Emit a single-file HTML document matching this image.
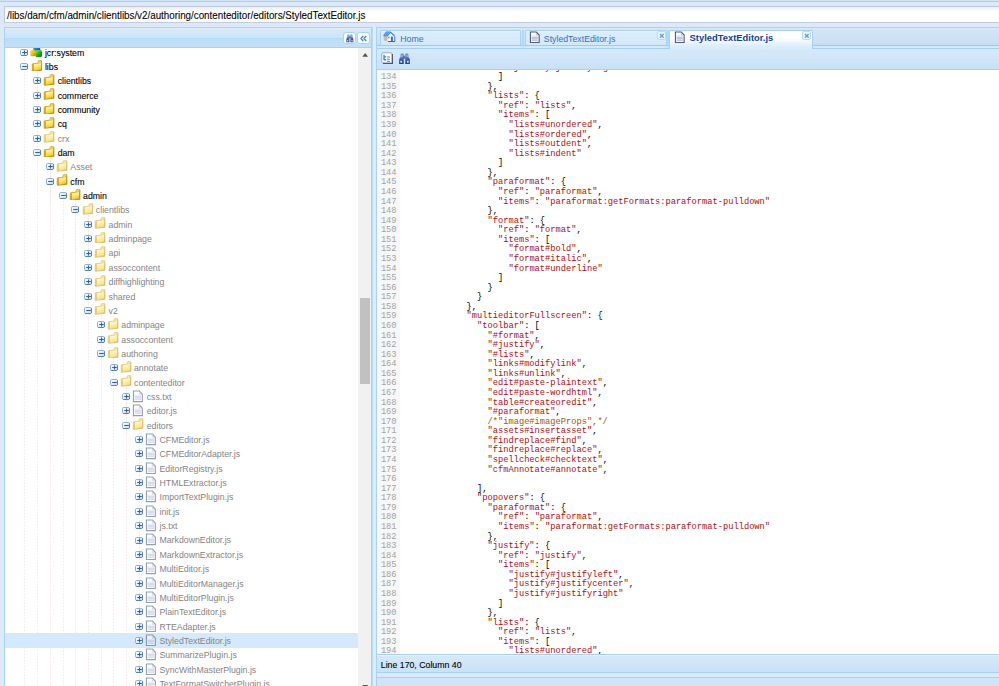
<!DOCTYPE html>
<html><head><meta charset="utf-8"><style>
*{margin:0;padding:0;box-sizing:border-box}
html,body{width:999px;height:686px;overflow:hidden;background:#dde9f7;font-family:"Liberation Sans",sans-serif;position:relative}
.abs{position:absolute}
#topband{left:0;top:0;width:999px;height:2px;background:linear-gradient(#cfe3f7 0,#cfe3f7 1px,#a8d0f2 1px)}
#addr{left:4px;top:5.6px;width:1000px;height:17.6px;border:1px solid #bcc8e4;border-bottom-color:#c2cce6;background:linear-gradient(#e8f0ee,#ffffff 5px);white-space:nowrap;overflow:hidden}
#addr span{position:absolute;left:1.7px;top:1.2px;font-size:11.6px;line-height:14px;color:#000;-webkit-text-stroke:0.1px #000;transform:scaleX(0.845);transform-origin:0 0}
#lp{left:4px;top:27px;width:368px;height:670px;border:1px solid #a8d4f4;background:#fff;overflow:hidden}
#lph{left:0;top:0;width:366px;height:19.9px;border-bottom:1px solid #a4d2f3;background:linear-gradient(#e0effb 0,#e0effb 1px,#d7eafa 1px,#cbe5f8 9.6px,#b6dbf6 10.4px,#badef6 11px,#c2e1f8 19.5px)}
.hb{position:absolute;top:4.2px;width:12.6px;height:11.8px;border:1px solid #a9d3f3;border-radius:3px;background:#fbfdff;box-shadow:0 0 0 0.5px #c8e4f8}
#tree{position:absolute;left:-5px;top:-28px;width:1000px;height:800px}
#tree .exp{position:absolute;width:8px;height:7.2px}
#tree .ic{position:absolute;width:11.8px;height:11.8px}
#tree .ic.g{opacity:.58}
#tree .tx{position:absolute;font-size:8.75px;line-height:14.35px;color:#000;-webkit-text-stroke:0.1px #000;white-space:nowrap}
#tree .tx.g{color:#848484;-webkit-text-stroke:0}
.vl{position:absolute;width:1px;background:repeating-linear-gradient(#f5e6e6 0,#f5e6e6 1.5px,#fefafa 1.5px,#fefafa 3px)}
.selrow{position:absolute;left:5px;width:353px;height:14.9px;background:#d4eafc}
#sb{left:353px;top:19.9px;width:12.5px;height:660px;background:#f1f1f1}
#thumb{left:1.6px;top:249.8px;width:10.4px;height:86.5px;background:#c1c1c1}
#split{left:372px;top:27px;width:4px;height:660px;background:linear-gradient(90deg,#b5dbf5 0,#b5dbf5 1px,#deebfa 1px)}
#rp{left:376px;top:27px;width:630px;height:660px;border-left:1px solid #a8d4f4;border-top:1px solid #a8d4f4}
#strip{left:0;top:0;width:630px;height:18px;background:linear-gradient(#d6e7f8,#c5def5)}
.tab{position:absolute;top:2.2px;height:14.9px;border:1px solid #a6d2f3;border-bottom:none;background:linear-gradient(#eaf4fd 0,#eaf4fd 1px,#dceefc 1px,#d2e8fb);border-radius:2px 2px 0 0;white-space:nowrap}
.tab .t{position:absolute;top:1.4px;font-size:8.75px;line-height:12px;color:#3570c0}
.tab.act{height:19px;background:linear-gradient(#ffffff 0,#ffffff 7px,#dcedfc 15px,#d8ebfb)}
.tab.act .t{font-weight:bold;color:#15428b;font-size:9.4px;top:0.7px}
.tab .x{position:absolute;top:0px;width:8.6px;height:8.4px;border:1px solid #b8dcf6;border-radius:2px;background:#eaf5fe}
#stripb{left:0;top:16.9px;width:630px;height:4px;background:linear-gradient(#9ccbf0 0,#9ccbf0 1.2px,#e6f2fb 1.6px,#e6f2fb 2.4px,#a3cff2 2.8px,#a3cff2 4px)}
#tb{left:0;top:20.9px;width:630px;height:21.4px;background:linear-gradient(#d7e9f9,#c8e1f7);border-bottom:1.2px solid #a4d2f3}
#code{left:0;top:42.3px;width:630px;height:584px;background:#fff;overflow:hidden}
#gut{left:0;top:0;width:22.8px;height:584px;background:#f7f7f7}
.cl,.ln{position:absolute;font-family:"Liberation Mono",monospace;font-size:8.73px;line-height:9.573px;white-space:pre}
.cl{left:26.8px;color:#000}
.ln{left:0;width:19.6px;text-align:right;color:#a3a3a3}
.s{color:#a11}
.c{color:#a50}
#stat{left:0;top:625.6px;width:630px;height:19.8px;border-top:1.2px solid #a4d2f3;border-bottom:1.2px solid #a4d2f3;background:linear-gradient(#e8f3fc 0,#e8f3fc 1px,#d6e9f9 1px,#c9e2f6)}
#stat span{position:absolute;left:3.8px;top:5.5px;font-size:8.75px;line-height:10px;color:#000;-webkit-text-stroke:0.1px #000}
#bot{left:376px;top:677.4px;width:630px;height:20px;border:1px solid #a4d2f3;background:#cfe4f8}
.ticon{position:absolute;width:11.5px;height:11.5px}
</style></head>
<body>
<svg width="0" height="0" style="position:absolute">
<defs>
<linearGradient id="gexp" x1="0" y1="0" x2="1" y2="1"><stop offset="0" stop-color="#ffffff"/><stop offset="1" stop-color="#cfe1f1"/></linearGradient>
<linearGradient id="gfold" x1="0" y1="0" x2="0.3" y2="1"><stop offset="0" stop-color="#fffbd0"/><stop offset="0.5" stop-color="#fbe97a"/><stop offset="1" stop-color="#f2c82a"/></linearGradient>
<linearGradient id="gfoldb" x1="0" y1="0" x2="1" y2="1"><stop offset="0" stop-color="#e8b830"/><stop offset="1" stop-color="#b98a12"/></linearGradient>
<linearGradient id="gbino" x1="0" y1="0" x2="0" y2="1"><stop offset="0" stop-color="#6d8fd0"/><stop offset="1" stop-color="#1f3f8a"/></linearGradient>
<g id="ep"><rect x="0.5" y="0.5" width="7" height="6" rx="1.2" fill="url(#gexp)" stroke="#8cb0d3" stroke-width="1"/><path d="M1.2 6.5H6.8M7.5 1.3V6" fill="none" stroke="#5684b2" stroke-width="1"/><path d="M2.2 3.5H6.8M4.5 1.4V5.6" stroke="#33638f" stroke-width="1.1"/></g>
<g id="em"><rect x="0.5" y="0.5" width="7" height="6" rx="1.2" fill="url(#gexp)" stroke="#8cb0d3" stroke-width="1"/><path d="M1.2 6.5H6.8M7.5 1.3V6" fill="none" stroke="#5684b2" stroke-width="1"/><path d="M2.2 3.5H6.8" stroke="#33638f" stroke-width="1.1"/></g>
<g id="ifold"><path d="M1 6.2 Q1 4.7 2.4 4.5 L8.6 3.6 L9.4 1.4 Q9.7 0.6 10.6 0.5 L14 0.3 Q15.4 0.3 15.4 1.8 L15.4 13.6 Q15.4 14.4 14.6 14.6 L2.4 16 Q1 16.1 1 14.7Z" fill="url(#gfoldb)"/><path d="M4 5.7 L13.6 3.9 L13.6 12.9 L4 14.6Z" fill="url(#gfold)"/><path d="M10.3 2.2 L14 1.9 L14 3.2 L10 3.8Z" fill="#fff6c0"/></g>
<g id="ifile"><path d="M1.2 0.6 H10.4 L14.8 5 V15.6 H1.2Z" fill="#4f5a6e"/><path d="M2.7 2 H9.6 L13.3 5.7 V14.1 H2.7Z" fill="#fbfbff"/><path d="M9.4 2 V5.9 H13.3" fill="#bfc6d6"/><path d="M3.6 8H12.2M3.6 9.9H12.2M3.6 11.8H12.2" stroke="#a9b2dc" stroke-width="1.3"/><path d="M2.6 6.6H12.4" stroke="#d9dcea" stroke-width="1"/></g>
<linearGradient id="gy" x1="0" y1="0" x2="1" y2="1"><stop offset="0" stop-color="#fff060"/><stop offset=".55" stop-color="#f2b800"/><stop offset="1" stop-color="#c87800"/></linearGradient>
<linearGradient id="gg" x1="0" y1="0" x2="1" y2="1"><stop offset="0" stop-color="#8af070"/><stop offset=".5" stop-color="#22b022"/><stop offset="1" stop-color="#0a700a"/></linearGradient>
<linearGradient id="gb" x1="0" y1="0" x2="1" y2="1"><stop offset="0" stop-color="#40a0ff"/><stop offset="1" stop-color="#0040c0"/></linearGradient>
<g id="isys"><rect x="4.3" y="0" width="9.5" height="5.6" rx="2.2" fill="url(#gb)"/><rect x="0.3" y="3.6" width="7.2" height="9" rx="2.2" fill="url(#gy)"/><rect x="7.1" y="4.2" width="9" height="9.5" rx="2.4" fill="url(#gg)"/></g>
<g id="ibino"><path d="M0.8 14.6 V9 Q0.8 6.6 2.8 5.6 V2 Q2.8 0.8 4 0.8 H5.8 Q7 0.8 7 2 V14.6Z M15.2 14.6 V9 Q15.2 6.6 13.2 5.6 V2 Q13.2 0.8 12 0.8 H10.2 Q9 0.8 9 2 V14.6Z M6.8 3.8H9.2V7.6H6.8Z" fill="url(#gbino)"/><rect x="2.6" y="10.4" width="2" height="2.8" rx=".6" fill="#eef4ff"/><rect x="11.4" y="10.4" width="2" height="2.8" rx=".6" fill="#eef4ff"/><rect x="3.8" y="2.4" width="1.6" height="3.2" fill="#a9c0ec"/><rect x="10.6" y="2.4" width="1.6" height="3.2" fill="#a9c0ec"/></g>
</defs></svg>
<div id="topband" class="abs"></div>
<div id="addr" class="abs"><span>/libs/dam/cfm/admin/clientlibs/v2/authoring/contenteditor/editors/StyledTextEditor.js</span></div>
<div id="lp" class="abs">
  <div id="tree"><div class="vl" style="left:24.35px;top:56.65px;height:643.35px"></div><div class="vl" style="left:37.08px;top:71.00px;height:629.00px"></div><div class="vl" style="left:49.81px;top:157.10px;height:542.90px"></div><div class="vl" style="left:62.54px;top:185.80px;height:514.20px"></div><div class="vl" style="left:75.27px;top:200.15px;height:499.85px"></div><div class="vl" style="left:88.00px;top:214.50px;height:485.50px"></div><div class="vl" style="left:100.73px;top:314.95px;height:385.05px"></div><div class="vl" style="left:113.46px;top:358.00px;height:342.00px"></div><div class="vl" style="left:126.19px;top:386.70px;height:313.30px"></div><div class="vl" style="left:138.92px;top:429.75px;height:270.25px"></div><svg class="exp" style="left:20px;top:49px" viewBox="0 0 8 7.2"><use href="#ep"/></svg><svg class="ic" style="left:30.10px;top:47.25px;width:12px;height:10px" viewBox="0 0 16 13.5"><use href="#isys"/></svg><div class="tx" style="left:44.90px;top:45.55px">jcr:system</div><svg class="exp" style="left:20px;top:63px" viewBox="0 0 8 7.2"><use href="#em"/></svg><svg class="ic" style="left:30.60px;top:59.50px" viewBox="0 0 16 16"><use href="#ifold"/></svg><div class="tx" style="left:44.90px;top:59.90px">libs</div><svg class="exp" style="left:33px;top:77px" viewBox="0 0 8 7.2"><use href="#ep"/></svg><svg class="ic" style="left:43.33px;top:73.85px" viewBox="0 0 16 16"><use href="#ifold"/></svg><div class="tx" style="left:57.63px;top:74.25px">clientlibs</div><svg class="exp" style="left:33px;top:92px" viewBox="0 0 8 7.2"><use href="#ep"/></svg><svg class="ic" style="left:43.33px;top:88.20px" viewBox="0 0 16 16"><use href="#ifold"/></svg><div class="tx" style="left:57.63px;top:88.60px">commerce</div><svg class="exp" style="left:33px;top:106px" viewBox="0 0 8 7.2"><use href="#ep"/></svg><svg class="ic" style="left:43.33px;top:102.55px" viewBox="0 0 16 16"><use href="#ifold"/></svg><div class="tx" style="left:57.63px;top:102.95px">community</div><svg class="exp" style="left:33px;top:120px" viewBox="0 0 8 7.2"><use href="#ep"/></svg><svg class="ic" style="left:43.33px;top:116.90px" viewBox="0 0 16 16"><use href="#ifold"/></svg><div class="tx" style="left:57.63px;top:117.30px">cq</div><svg class="exp" style="left:33px;top:135px" viewBox="0 0 8 7.2"><use href="#ep"/></svg><svg class="ic g" style="left:43.33px;top:131.25px" viewBox="0 0 16 16"><use href="#ifold"/></svg><div class="tx g" style="left:57.63px;top:131.65px">crx</div><svg class="exp" style="left:33px;top:149px" viewBox="0 0 8 7.2"><use href="#em"/></svg><svg class="ic" style="left:43.33px;top:145.60px" viewBox="0 0 16 16"><use href="#ifold"/></svg><div class="tx" style="left:57.63px;top:146.00px">dam</div><svg class="exp" style="left:46px;top:163px" viewBox="0 0 8 7.2"><use href="#ep"/></svg><svg class="ic g" style="left:56.06px;top:159.95px" viewBox="0 0 16 16"><use href="#ifold"/></svg><div class="tx g" style="left:70.36px;top:160.35px">Asset</div><svg class="exp" style="left:46px;top:178px" viewBox="0 0 8 7.2"><use href="#em"/></svg><svg class="ic" style="left:56.06px;top:174.30px" viewBox="0 0 16 16"><use href="#ifold"/></svg><div class="tx" style="left:70.36px;top:174.70px">cfm</div><svg class="exp" style="left:59px;top:192px" viewBox="0 0 8 7.2"><use href="#em"/></svg><svg class="ic" style="left:68.79px;top:188.65px" viewBox="0 0 16 16"><use href="#ifold"/></svg><div class="tx" style="left:83.09px;top:189.05px">admin</div><svg class="exp" style="left:71px;top:206px" viewBox="0 0 8 7.2"><use href="#em"/></svg><svg class="ic g" style="left:81.52px;top:203.00px" viewBox="0 0 16 16"><use href="#ifold"/></svg><div class="tx g" style="left:95.82px;top:203.40px">clientlibs</div><svg class="exp" style="left:84px;top:221px" viewBox="0 0 8 7.2"><use href="#ep"/></svg><svg class="ic g" style="left:94.25px;top:217.35px" viewBox="0 0 16 16"><use href="#ifold"/></svg><div class="tx g" style="left:108.55px;top:217.75px">admin</div><svg class="exp" style="left:84px;top:235px" viewBox="0 0 8 7.2"><use href="#ep"/></svg><svg class="ic g" style="left:94.25px;top:231.70px" viewBox="0 0 16 16"><use href="#ifold"/></svg><div class="tx g" style="left:108.55px;top:232.10px">adminpage</div><svg class="exp" style="left:84px;top:250px" viewBox="0 0 8 7.2"><use href="#ep"/></svg><svg class="ic g" style="left:94.25px;top:246.05px" viewBox="0 0 16 16"><use href="#ifold"/></svg><div class="tx g" style="left:108.55px;top:246.45px">api</div><svg class="exp" style="left:84px;top:264px" viewBox="0 0 8 7.2"><use href="#ep"/></svg><svg class="ic g" style="left:94.25px;top:260.40px" viewBox="0 0 16 16"><use href="#ifold"/></svg><div class="tx g" style="left:108.55px;top:260.80px">assoccontent</div><svg class="exp" style="left:84px;top:278px" viewBox="0 0 8 7.2"><use href="#ep"/></svg><svg class="ic g" style="left:94.25px;top:274.75px" viewBox="0 0 16 16"><use href="#ifold"/></svg><div class="tx g" style="left:108.55px;top:275.15px">diffhighlighting</div><svg class="exp" style="left:84px;top:293px" viewBox="0 0 8 7.2"><use href="#ep"/></svg><svg class="ic g" style="left:94.25px;top:289.10px" viewBox="0 0 16 16"><use href="#ifold"/></svg><div class="tx g" style="left:108.55px;top:289.50px">shared</div><svg class="exp" style="left:84px;top:307px" viewBox="0 0 8 7.2"><use href="#em"/></svg><svg class="ic g" style="left:94.25px;top:303.45px" viewBox="0 0 16 16"><use href="#ifold"/></svg><div class="tx g" style="left:108.55px;top:303.85px">v2</div><svg class="exp" style="left:97px;top:321px" viewBox="0 0 8 7.2"><use href="#ep"/></svg><svg class="ic g" style="left:106.98px;top:317.80px" viewBox="0 0 16 16"><use href="#ifold"/></svg><div class="tx g" style="left:121.28px;top:318.20px">adminpage</div><svg class="exp" style="left:97px;top:336px" viewBox="0 0 8 7.2"><use href="#ep"/></svg><svg class="ic g" style="left:106.98px;top:332.15px" viewBox="0 0 16 16"><use href="#ifold"/></svg><div class="tx g" style="left:121.28px;top:332.55px">assoccontent</div><svg class="exp" style="left:97px;top:350px" viewBox="0 0 8 7.2"><use href="#em"/></svg><svg class="ic g" style="left:106.98px;top:346.50px" viewBox="0 0 16 16"><use href="#ifold"/></svg><div class="tx g" style="left:121.28px;top:346.90px">authoring</div><svg class="exp" style="left:110px;top:364px" viewBox="0 0 8 7.2"><use href="#ep"/></svg><svg class="ic g" style="left:119.71px;top:360.85px" viewBox="0 0 16 16"><use href="#ifold"/></svg><div class="tx g" style="left:134.01px;top:361.25px">annotate</div><svg class="exp" style="left:110px;top:379px" viewBox="0 0 8 7.2"><use href="#em"/></svg><svg class="ic g" style="left:119.71px;top:375.20px" viewBox="0 0 16 16"><use href="#ifold"/></svg><div class="tx g" style="left:134.01px;top:375.60px">contenteditor</div><svg class="exp" style="left:122px;top:393px" viewBox="0 0 8 7.2"><use href="#ep"/></svg><svg class="ic g" style="left:132.24px;top:389.95px;height:12.6px" viewBox="0 0 16 16" preserveAspectRatio="none"><use href="#ifile"/></svg><div class="tx g" style="left:146.74px;top:389.95px">css.txt</div><svg class="exp" style="left:122px;top:407px" viewBox="0 0 8 7.2"><use href="#ep"/></svg><svg class="ic g" style="left:132.24px;top:404.30px;height:12.6px" viewBox="0 0 16 16" preserveAspectRatio="none"><use href="#ifile"/></svg><div class="tx g" style="left:146.74px;top:404.30px">editor.js</div><svg class="exp" style="left:122px;top:422px" viewBox="0 0 8 7.2"><use href="#em"/></svg><svg class="ic g" style="left:132.44px;top:418.25px" viewBox="0 0 16 16"><use href="#ifold"/></svg><div class="tx g" style="left:146.74px;top:418.65px">editors</div><svg class="exp" style="left:135px;top:436px" viewBox="0 0 8 7.2"><use href="#ep"/></svg><svg class="ic g" style="left:144.97px;top:433.00px;height:12.6px" viewBox="0 0 16 16" preserveAspectRatio="none"><use href="#ifile"/></svg><div class="tx g" style="left:159.47px;top:433.00px">CFMEditor.js</div><svg class="exp" style="left:135px;top:450px" viewBox="0 0 8 7.2"><use href="#ep"/></svg><svg class="ic g" style="left:144.97px;top:447.35px;height:12.6px" viewBox="0 0 16 16" preserveAspectRatio="none"><use href="#ifile"/></svg><div class="tx g" style="left:159.47px;top:447.35px">CFMEditorAdapter.js</div><svg class="exp" style="left:135px;top:465px" viewBox="0 0 8 7.2"><use href="#ep"/></svg><svg class="ic g" style="left:144.97px;top:461.70px;height:12.6px" viewBox="0 0 16 16" preserveAspectRatio="none"><use href="#ifile"/></svg><div class="tx g" style="left:159.47px;top:461.70px">EditorRegistry.js</div><svg class="exp" style="left:135px;top:479px" viewBox="0 0 8 7.2"><use href="#ep"/></svg><svg class="ic g" style="left:144.97px;top:476.05px;height:12.6px" viewBox="0 0 16 16" preserveAspectRatio="none"><use href="#ifile"/></svg><div class="tx g" style="left:159.47px;top:476.05px">HTMLExtractor.js</div><svg class="exp" style="left:135px;top:493px" viewBox="0 0 8 7.2"><use href="#ep"/></svg><svg class="ic g" style="left:144.97px;top:490.40px;height:12.6px" viewBox="0 0 16 16" preserveAspectRatio="none"><use href="#ifile"/></svg><div class="tx g" style="left:159.47px;top:490.40px">ImportTextPlugin.js</div><svg class="exp" style="left:135px;top:508px" viewBox="0 0 8 7.2"><use href="#ep"/></svg><svg class="ic g" style="left:144.97px;top:504.75px;height:12.6px" viewBox="0 0 16 16" preserveAspectRatio="none"><use href="#ifile"/></svg><div class="tx g" style="left:159.47px;top:504.75px">init.js</div><svg class="exp" style="left:135px;top:522px" viewBox="0 0 8 7.2"><use href="#ep"/></svg><svg class="ic g" style="left:144.97px;top:519.10px;height:12.6px" viewBox="0 0 16 16" preserveAspectRatio="none"><use href="#ifile"/></svg><div class="tx g" style="left:159.47px;top:519.10px">js.txt</div><svg class="exp" style="left:135px;top:537px" viewBox="0 0 8 7.2"><use href="#ep"/></svg><svg class="ic g" style="left:144.97px;top:533.45px;height:12.6px" viewBox="0 0 16 16" preserveAspectRatio="none"><use href="#ifile"/></svg><div class="tx g" style="left:159.47px;top:533.45px">MarkdownEditor.js</div><svg class="exp" style="left:135px;top:551px" viewBox="0 0 8 7.2"><use href="#ep"/></svg><svg class="ic g" style="left:144.97px;top:547.80px;height:12.6px" viewBox="0 0 16 16" preserveAspectRatio="none"><use href="#ifile"/></svg><div class="tx g" style="left:159.47px;top:547.80px">MarkdownExtractor.js</div><svg class="exp" style="left:135px;top:565px" viewBox="0 0 8 7.2"><use href="#ep"/></svg><svg class="ic g" style="left:144.97px;top:562.15px;height:12.6px" viewBox="0 0 16 16" preserveAspectRatio="none"><use href="#ifile"/></svg><div class="tx g" style="left:159.47px;top:562.15px">MultiEditor.js</div><svg class="exp" style="left:135px;top:580px" viewBox="0 0 8 7.2"><use href="#ep"/></svg><svg class="ic g" style="left:144.97px;top:576.50px;height:12.6px" viewBox="0 0 16 16" preserveAspectRatio="none"><use href="#ifile"/></svg><div class="tx g" style="left:159.47px;top:576.50px">MultiEditorManager.js</div><svg class="exp" style="left:135px;top:594px" viewBox="0 0 8 7.2"><use href="#ep"/></svg><svg class="ic g" style="left:144.97px;top:590.85px;height:12.6px" viewBox="0 0 16 16" preserveAspectRatio="none"><use href="#ifile"/></svg><div class="tx g" style="left:159.47px;top:590.85px">MultiEditorPlugin.js</div><svg class="exp" style="left:135px;top:608px" viewBox="0 0 8 7.2"><use href="#ep"/></svg><svg class="ic g" style="left:144.97px;top:605.20px;height:12.6px" viewBox="0 0 16 16" preserveAspectRatio="none"><use href="#ifile"/></svg><div class="tx g" style="left:159.47px;top:605.20px">PlainTextEditor.js</div><svg class="exp" style="left:135px;top:623px" viewBox="0 0 8 7.2"><use href="#ep"/></svg><svg class="ic g" style="left:144.97px;top:619.55px;height:12.6px" viewBox="0 0 16 16" preserveAspectRatio="none"><use href="#ifile"/></svg><div class="tx g" style="left:159.47px;top:619.55px">RTEAdapter.js</div><div class="selrow" style="top:633.00px"></div><svg class="exp" style="left:135px;top:637px" viewBox="0 0 8 7.2"><use href="#ep"/></svg><svg class="ic g" style="left:144.97px;top:633.90px;height:12.6px" viewBox="0 0 16 16" preserveAspectRatio="none"><use href="#ifile"/></svg><div class="tx g" style="left:159.47px;top:633.90px">StyledTextEditor.js</div><svg class="exp" style="left:135px;top:651px" viewBox="0 0 8 7.2"><use href="#ep"/></svg><svg class="ic g" style="left:144.97px;top:648.25px;height:12.6px" viewBox="0 0 16 16" preserveAspectRatio="none"><use href="#ifile"/></svg><div class="tx g" style="left:159.47px;top:648.25px">SummarizePlugin.js</div><svg class="exp" style="left:135px;top:666px" viewBox="0 0 8 7.2"><use href="#ep"/></svg><svg class="ic g" style="left:144.97px;top:662.60px;height:12.6px" viewBox="0 0 16 16" preserveAspectRatio="none"><use href="#ifile"/></svg><div class="tx g" style="left:159.47px;top:662.60px">SyncWithMasterPlugin.js</div><svg class="exp" style="left:135px;top:680px" viewBox="0 0 8 7.2"><use href="#ep"/></svg><svg class="ic g" style="left:144.97px;top:676.95px;height:12.6px" viewBox="0 0 16 16" preserveAspectRatio="none"><use href="#ifile"/></svg><div class="tx g" style="left:159.47px;top:676.95px">TextFormatSwitcherPlugin.js</div></div>
  <div id="lph" class="abs">
    <div class="hb" style="left:338.3px"><svg style="position:absolute;left:1.6px;top:0.9px;width:7.8px;height:8.6px" viewBox="0 0 16 15" preserveAspectRatio="none"><use href="#ibino"/></svg></div>
    <div class="hb" style="left:352.3px"><svg style="position:absolute;left:0.9px;top:0.7px;width:9px;height:9px" viewBox="0 0 10 10"><path d="M4.7 2 L2.2 5 L4.7 8 M8 2 L5.5 5 L8 8" fill="none" stroke="#2f7fcc" stroke-width="1.4"/></svg></div>
  </div>
  <div id="sb" class="abs"><svg class="abs" style="left:3.6px;top:5.6px;width:6.4px;height:3.8px" viewBox="0 0 6 4"><path d="M0 4 L3 0 L6 4Z" fill="#505050"/></svg><div id="thumb" class="abs"></div><svg class="abs" style="left:3.6px;top:636.8px;width:6.4px;height:3.8px" viewBox="0 0 6 4"><path d="M0 0 L3 4 L6 0Z" fill="#505050"/></svg></div>
</div>
<div id="split" class="abs"></div>
<div id="rp" class="abs">
  <div id="strip" class="abs"></div>
  <div id="stripb" class="abs"></div><div class="abs" style="left:145.2px;top:1.5px;width:2px;height:17px;background:#b3d8f5"></div><div class="abs" style="left:290.4px;top:1.5px;width:2px;height:17px;background:#b3d8f5"></div>
  <div class="tab" style="left:2.7px;width:141.3px"><svg class="abs" style="left:2.3px;top:0.2px;width:13px;height:11.2px" viewBox="0 0 13 11.2"><path d="M11.8 5.4V10.6H5" fill="none" stroke="#5a5a5a" stroke-width="1"/><path d="M0.6 4.6 L4.6 5.4 L4.6 10.2 L0.9 9.5Z" fill="#c4bbb0"/><path d="M4.6 5.4 L7.4 2 L11.2 5.3 L11.2 10.1 L4.6 10.1Z" fill="#f6f4ef"/><path d="M0.3 4.3 L3.1 0.4 L7.7 0.6 L12 4.6 L11.2 5.5 L7.4 2.1 L4.6 5.6 L0.3 5Z" fill="#3b8ae6"/><path d="M3.3 0.9 L7.2 1.1 L4.4 4.6 L1 4.2Z" fill="#5aa5f2"/><rect x="7.9" y="5.6" width="2" height="4.5" fill="#1f78e6"/><rect x="5.3" y="5.8" width="1.1" height="1.5" fill="#6a6a6a"/></svg><span class="t" style="left:19.6px;top:1.6px">Home</span></div>
  <div class="tab" style="left:148px;width:141.5px"><svg class="ticon" style="left:2.6px;top:0.1px;width:11.6px;height:12.4px" viewBox="0 0 16 16" preserveAspectRatio="none"><use href="#ifile"/></svg><span class="t" style="left:17.8px">StyledTextEditor.js</span><span class="x" style="left:131px"><svg style="position:absolute;left:0.9px;top:0.8px;width:5.6px;height:5.6px" viewBox="0 0 6 6"><path d="M1 1L5 5M5 1L1 5" stroke="#5aa2e0" stroke-width="1.5"/></svg></span></div>
  <div class="tab act" style="left:292.4px;width:144px"><svg class="ticon" style="left:3.4px;top:0.1px;width:11.6px;height:12.4px" viewBox="0 0 16 16" preserveAspectRatio="none"><use href="#ifile"/></svg><span class="t" style="left:19.2px">StyledTextEditor.js</span><span class="x" style="left:131.6px"><svg style="position:absolute;left:0.9px;top:0.8px;width:5.6px;height:5.6px" viewBox="0 0 6 6"><path d="M1 1L5 5M5 1L1 5" stroke="#5aa2e0" stroke-width="1.5"/></svg></span></div>
  <div id="tb" class="abs"><svg class="abs" style="left:4px;top:3.2px;width:12.4px;height:12.4px" viewBox="0 0 16 16"><rect x="1" y="1" width="13" height="13" rx="1.6" fill="#fff" stroke="#8f98b8" stroke-width="1.1"/><path d="M14.9 2.6V14.9H2.6" fill="none" stroke="#4f5872" stroke-width="1.4"/><path d="M3.9 3.4V10.8M3.9 6.4H6.6M3.9 10H6.6" fill="none" stroke="#2d8ae6" stroke-width="1.7"/><path d="M7.6 6.4H11.6M7.6 9.3H11.6M7.6 12H11.6" stroke="#6a6a6a" stroke-width="1.1"/></svg><svg class="abs" style="left:21.4px;top:4.6px;width:13px;height:11.2px" viewBox="0 0 16 15"><use href="#ibino"/></svg></div>
  <div id="code" class="abs"><div id="gut" class="abs"></div><div class="ln" style="top:-6.77px">133</div><div class="ln" style="top:2.80px">134</div><div class="ln" style="top:12.37px">135</div><div class="ln" style="top:21.95px">136</div><div class="ln" style="top:31.52px">137</div><div class="ln" style="top:41.09px">138</div><div class="ln" style="top:50.66px">139</div><div class="ln" style="top:60.24px">140</div><div class="ln" style="top:69.81px">141</div><div class="ln" style="top:79.38px">142</div><div class="ln" style="top:88.96px">143</div><div class="ln" style="top:98.53px">144</div><div class="ln" style="top:108.10px">145</div><div class="ln" style="top:117.68px">146</div><div class="ln" style="top:127.25px">147</div><div class="ln" style="top:136.82px">148</div><div class="ln" style="top:146.40px">149</div><div class="ln" style="top:155.97px">150</div><div class="ln" style="top:165.54px">151</div><div class="ln" style="top:175.11px">152</div><div class="ln" style="top:184.69px">153</div><div class="ln" style="top:194.26px">154</div><div class="ln" style="top:203.83px">155</div><div class="ln" style="top:213.41px">156</div><div class="ln" style="top:222.98px">157</div><div class="ln" style="top:232.55px">158</div><div class="ln" style="top:242.13px">159</div><div class="ln" style="top:251.70px">160</div><div class="ln" style="top:261.27px">161</div><div class="ln" style="top:270.84px">162</div><div class="ln" style="top:280.42px">163</div><div class="ln" style="top:289.99px">164</div><div class="ln" style="top:299.56px">165</div><div class="ln" style="top:309.14px">166</div><div class="ln" style="top:318.71px">167</div><div class="ln" style="top:328.28px">168</div><div class="ln" style="top:337.85px">169</div><div class="ln" style="top:347.43px">170</div><div class="ln" style="top:357.00px">171</div><div class="ln" style="top:366.57px">172</div><div class="ln" style="top:376.15px">173</div><div class="ln" style="top:385.72px">174</div><div class="ln" style="top:395.29px">175</div><div class="ln" style="top:404.87px">176</div><div class="ln" style="top:414.44px">177</div><div class="ln" style="top:424.01px">178</div><div class="ln" style="top:433.58px">179</div><div class="ln" style="top:443.16px">180</div><div class="ln" style="top:452.73px">181</div><div class="ln" style="top:462.30px">182</div><div class="ln" style="top:471.88px">183</div><div class="ln" style="top:481.45px">184</div><div class="ln" style="top:491.02px">185</div><div class="ln" style="top:500.60px">186</div><div class="ln" style="top:510.17px">187</div><div class="ln" style="top:519.74px">188</div><div class="ln" style="top:529.31px">189</div><div class="ln" style="top:538.89px">190</div><div class="ln" style="top:548.46px">191</div><div class="ln" style="top:558.03px">192</div><div class="ln" style="top:567.61px">193</div><div class="ln" style="top:577.18px">194</div><div class="cl" style="top:-6.77px">                    <span class="s">&quot;justify#justifyright&quot;</span></div><div class="cl" style="top:2.80px">                  ]</div><div class="cl" style="top:12.37px">                },</div><div class="cl" style="top:21.95px">                <span class="s">&quot;lists&quot;</span>: {</div><div class="cl" style="top:31.52px">                  <span class="s">&quot;ref&quot;</span>: <span class="s">&quot;lists&quot;</span>,</div><div class="cl" style="top:41.09px">                  <span class="s">&quot;items&quot;</span>: [</div><div class="cl" style="top:50.66px">                    <span class="s">&quot;lists#unordered&quot;</span>,</div><div class="cl" style="top:60.24px">                    <span class="s">&quot;lists#ordered&quot;</span>,</div><div class="cl" style="top:69.81px">                    <span class="s">&quot;lists#outdent&quot;</span>,</div><div class="cl" style="top:79.38px">                    <span class="s">&quot;lists#indent&quot;</span></div><div class="cl" style="top:88.96px">                  ]</div><div class="cl" style="top:98.53px">                },</div><div class="cl" style="top:108.10px">                <span class="s">&quot;paraformat&quot;</span>: {</div><div class="cl" style="top:117.68px">                  <span class="s">&quot;ref&quot;</span>: <span class="s">&quot;paraformat&quot;</span>,</div><div class="cl" style="top:127.25px">                  <span class="s">&quot;items&quot;</span>: <span class="s">&quot;paraformat:getFormats:paraformat-pulldown&quot;</span></div><div class="cl" style="top:136.82px">                },</div><div class="cl" style="top:146.40px">                <span class="s">&quot;format&quot;</span>: {</div><div class="cl" style="top:155.97px">                  <span class="s">&quot;ref&quot;</span>: <span class="s">&quot;format&quot;</span>,</div><div class="cl" style="top:165.54px">                  <span class="s">&quot;items&quot;</span>: [</div><div class="cl" style="top:175.11px">                    <span class="s">&quot;format#bold&quot;</span>,</div><div class="cl" style="top:184.69px">                    <span class="s">&quot;format#italic&quot;</span>,</div><div class="cl" style="top:194.26px">                    <span class="s">&quot;format#underline&quot;</span></div><div class="cl" style="top:203.83px">                  ]</div><div class="cl" style="top:213.41px">                }</div><div class="cl" style="top:222.98px">              }</div><div class="cl" style="top:232.55px">            },</div><div class="cl" style="top:242.13px">            <span class="s">&quot;multieditorFullscreen&quot;</span>: {</div><div class="cl" style="top:251.70px">              <span class="s">&quot;toolbar&quot;</span>: [</div><div class="cl" style="top:261.27px">                <span class="s">&quot;#format&quot;</span>,</div><div class="cl" style="top:270.84px">                <span class="s">&quot;#justify&quot;</span>,</div><div class="cl" style="top:280.42px">                <span class="s">&quot;#lists&quot;</span>,</div><div class="cl" style="top:289.99px">                <span class="s">&quot;links#modifylink&quot;</span>,</div><div class="cl" style="top:299.56px">                <span class="s">&quot;links#unlink&quot;</span>,</div><div class="cl" style="top:309.14px">                <span class="s">&quot;edit#paste-plaintext&quot;</span>,</div><div class="cl" style="top:318.71px">                <span class="s">&quot;edit#paste-wordhtml&quot;</span>,</div><div class="cl" style="top:328.28px">                <span class="s">&quot;table#createoredit&quot;</span>,</div><div class="cl" style="top:337.85px">                <span class="s">&quot;#paraformat&quot;</span>,</div><div class="cl" style="top:347.43px">                <span class="c">/*&quot;image#imageProps&quot;,*/</span></div><div class="cl" style="top:357.00px">                <span class="s">&quot;assets#insertasset&quot;</span>,</div><div class="cl" style="top:366.57px">                <span class="s">&quot;findreplace#find&quot;</span>,</div><div class="cl" style="top:376.15px">                <span class="s">&quot;findreplace#replace&quot;</span>,</div><div class="cl" style="top:385.72px">                <span class="s">&quot;spellcheck#checktext&quot;</span>,</div><div class="cl" style="top:395.29px">                <span class="s">&quot;cfmAnnotate#annotate&quot;</span>,</div><div class="cl" style="top:404.87px"></div><div class="cl" style="top:414.44px">              ],</div><div class="cl" style="top:424.01px">              <span class="s">&quot;popovers&quot;</span>: {</div><div class="cl" style="top:433.58px">                <span class="s">&quot;paraformat&quot;</span>: {</div><div class="cl" style="top:443.16px">                  <span class="s">&quot;ref&quot;</span>: <span class="s">&quot;paraformat&quot;</span>,</div><div class="cl" style="top:452.73px">                  <span class="s">&quot;items&quot;</span>: <span class="s">&quot;paraformat:getFormats:paraformat-pulldown&quot;</span></div><div class="cl" style="top:462.30px">                },</div><div class="cl" style="top:471.88px">                <span class="s">&quot;justify&quot;</span>: {</div><div class="cl" style="top:481.45px">                  <span class="s">&quot;ref&quot;</span>: <span class="s">&quot;justify&quot;</span>,</div><div class="cl" style="top:491.02px">                  <span class="s">&quot;items&quot;</span>: [</div><div class="cl" style="top:500.60px">                    <span class="s">&quot;justify#justifyleft&quot;</span>,</div><div class="cl" style="top:510.17px">                    <span class="s">&quot;justify#justifycenter&quot;</span>,</div><div class="cl" style="top:519.74px">                    <span class="s">&quot;justify#justifyright&quot;</span></div><div class="cl" style="top:529.31px">                  ]</div><div class="cl" style="top:538.89px">                },</div><div class="cl" style="top:548.46px">                <span class="s">&quot;lists&quot;</span>: {</div><div class="cl" style="top:558.03px">                  <span class="s">&quot;ref&quot;</span>: <span class="s">&quot;lists&quot;</span>,</div><div class="cl" style="top:567.61px">                  <span class="s">&quot;items&quot;</span>: [</div><div class="cl" style="top:577.18px">                    <span class="s">&quot;lists#unordered&quot;</span>,</div></div>
  <div id="stat" class="abs"><span>Line 170, Column 40</span></div>
</div>
<div id="bot" class="abs"></div>
</body></html>
